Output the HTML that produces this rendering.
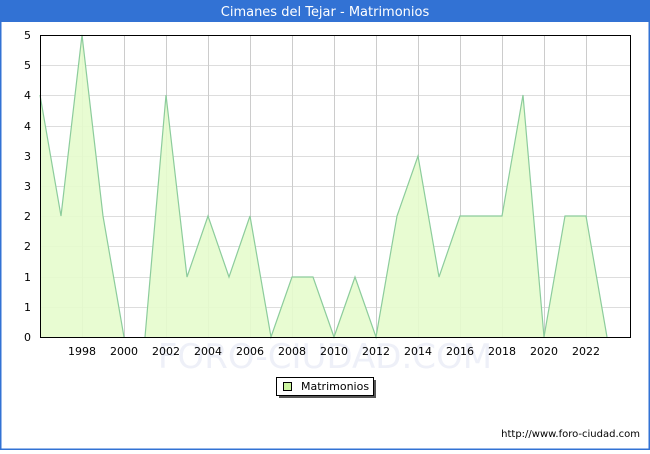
<!DOCTYPE html>
<html><head><style>
body{margin:0;width:650px;height:450px;overflow:hidden;background:#fff;font-family:"DejaVu Sans","Liberation Sans",sans-serif;}
</style></head><body>
<svg width="650" height="450" xmlns="http://www.w3.org/2000/svg" font-family="DejaVu Sans, Liberation Sans, sans-serif">
<rect x="0.5" y="0.5" width="649" height="449" fill="#fff" stroke="#3272d4" stroke-width="2"/>
<rect x="0" y="0" width="650" height="22" fill="#3272d4"/>
<text x="325" y="16" fill="#fff" font-size="13" text-anchor="middle">Cimanes del Tejar - Matrimonios</text>
<g stroke="#dddddd" stroke-width="1">
<line x1="40" y1="307.5" x2="630" y2="307.5"/><line x1="40" y1="277.5" x2="630" y2="277.5"/>
<line x1="40" y1="246.5" x2="630" y2="246.5"/><line x1="40" y1="216.5" x2="630" y2="216.5"/>
<line x1="40" y1="186.5" x2="630" y2="186.5"/><line x1="40" y1="156.5" x2="630" y2="156.5"/>
<line x1="40" y1="126.5" x2="630" y2="126.5"/><line x1="40" y1="95.5" x2="630" y2="95.5"/>
<line x1="40" y1="65.5" x2="630" y2="65.5"/>
</g>
<g stroke="#cccccc" stroke-width="1">
<line x1="82.5" y1="35" x2="82.5" y2="337"/><line x1="124.5" y1="35" x2="124.5" y2="337"/>
<line x1="166.5" y1="35" x2="166.5" y2="337"/><line x1="208.5" y1="35" x2="208.5" y2="337"/>
<line x1="250.5" y1="35" x2="250.5" y2="337"/><line x1="292.5" y1="35" x2="292.5" y2="337"/>
<line x1="334.5" y1="35" x2="334.5" y2="337"/><line x1="376.5" y1="35" x2="376.5" y2="337"/>
<line x1="418.5" y1="35" x2="418.5" y2="337"/><line x1="460.5" y1="35" x2="460.5" y2="337"/>
<line x1="502.5" y1="35" x2="502.5" y2="337"/><line x1="544.5" y1="35" x2="544.5" y2="337"/>
<line x1="586.5" y1="35" x2="586.5" y2="337"/>
</g>
<polygon fill="#e6fccd" fill-opacity="0.9" stroke="none" points="40,337 40,95 61,216 82,35 103,216 124,337 145,337 166,95 187,277 208,216 229,277 250,216 271,337 292,277 313,277 334,337 355,277 376,337 397,216 418,156 439,277 460,216 481,216 502,216 523,95 544,337 565,216 586,216 607,337"/>
<polyline fill="none" stroke="#8ccc9c" stroke-width="1.2" points="40,95 61,216 82,35 103,216 124,337"/>
<polyline fill="none" stroke="#8ccc9c" stroke-width="1.2" points="145,337 166,95 187,277 208,216 229,277 250,216 271,337 292,277 313,277 334,337 355,277 376,337 397,216 418,156 439,277 460,216 481,216 502,216 523,95 544,337 565,216 586,216 607,337"/>
<text x="325" y="368" fill="#eef0f8" font-size="34" text-anchor="middle">FORO-CIUDAD.COM</text>
<rect x="40.5" y="35.5" width="590" height="302" fill="none" stroke="#000" stroke-width="1"/>
<g font-size="11" fill="#000" text-anchor="end">
<text x="31" y="341">0</text><text x="31" y="311">1</text><text x="31" y="281">1</text>
<text x="31" y="250">2</text><text x="31" y="220">2</text><text x="31" y="190">3</text>
<text x="31" y="160">3</text><text x="31" y="130">4</text><text x="31" y="99">4</text>
<text x="31" y="69">5</text><text x="31" y="39">5</text>
</g>
<g font-size="11" fill="#000" text-anchor="middle">
<text x="82" y="355">1998</text><text x="124" y="355">2000</text><text x="166" y="355">2002</text>
<text x="208" y="355">2004</text><text x="250" y="355">2006</text><text x="292" y="355">2008</text>
<text x="334" y="355">2010</text><text x="376" y="355">2012</text><text x="418" y="355">2014</text>
<text x="460" y="355">2016</text><text x="502" y="355">2018</text><text x="544" y="355">2020</text>
<text x="586" y="355">2022</text>
</g>
<rect x="279" y="380" width="97" height="18" fill="#555"/>
<rect x="276.5" y="377.5" width="97" height="18" fill="#fff" stroke="#000" stroke-width="1"/>
<rect x="283.5" y="382.5" width="8" height="8" fill="#ccf5a0" stroke="#000" stroke-width="1"/>
<text x="301" y="390" font-size="11" fill="#000">Matrimonios</text>
<text x="640" y="437" font-size="10" fill="#000" text-anchor="end">http://www.foro-ciudad.com</text>
</svg>
</body></html>
